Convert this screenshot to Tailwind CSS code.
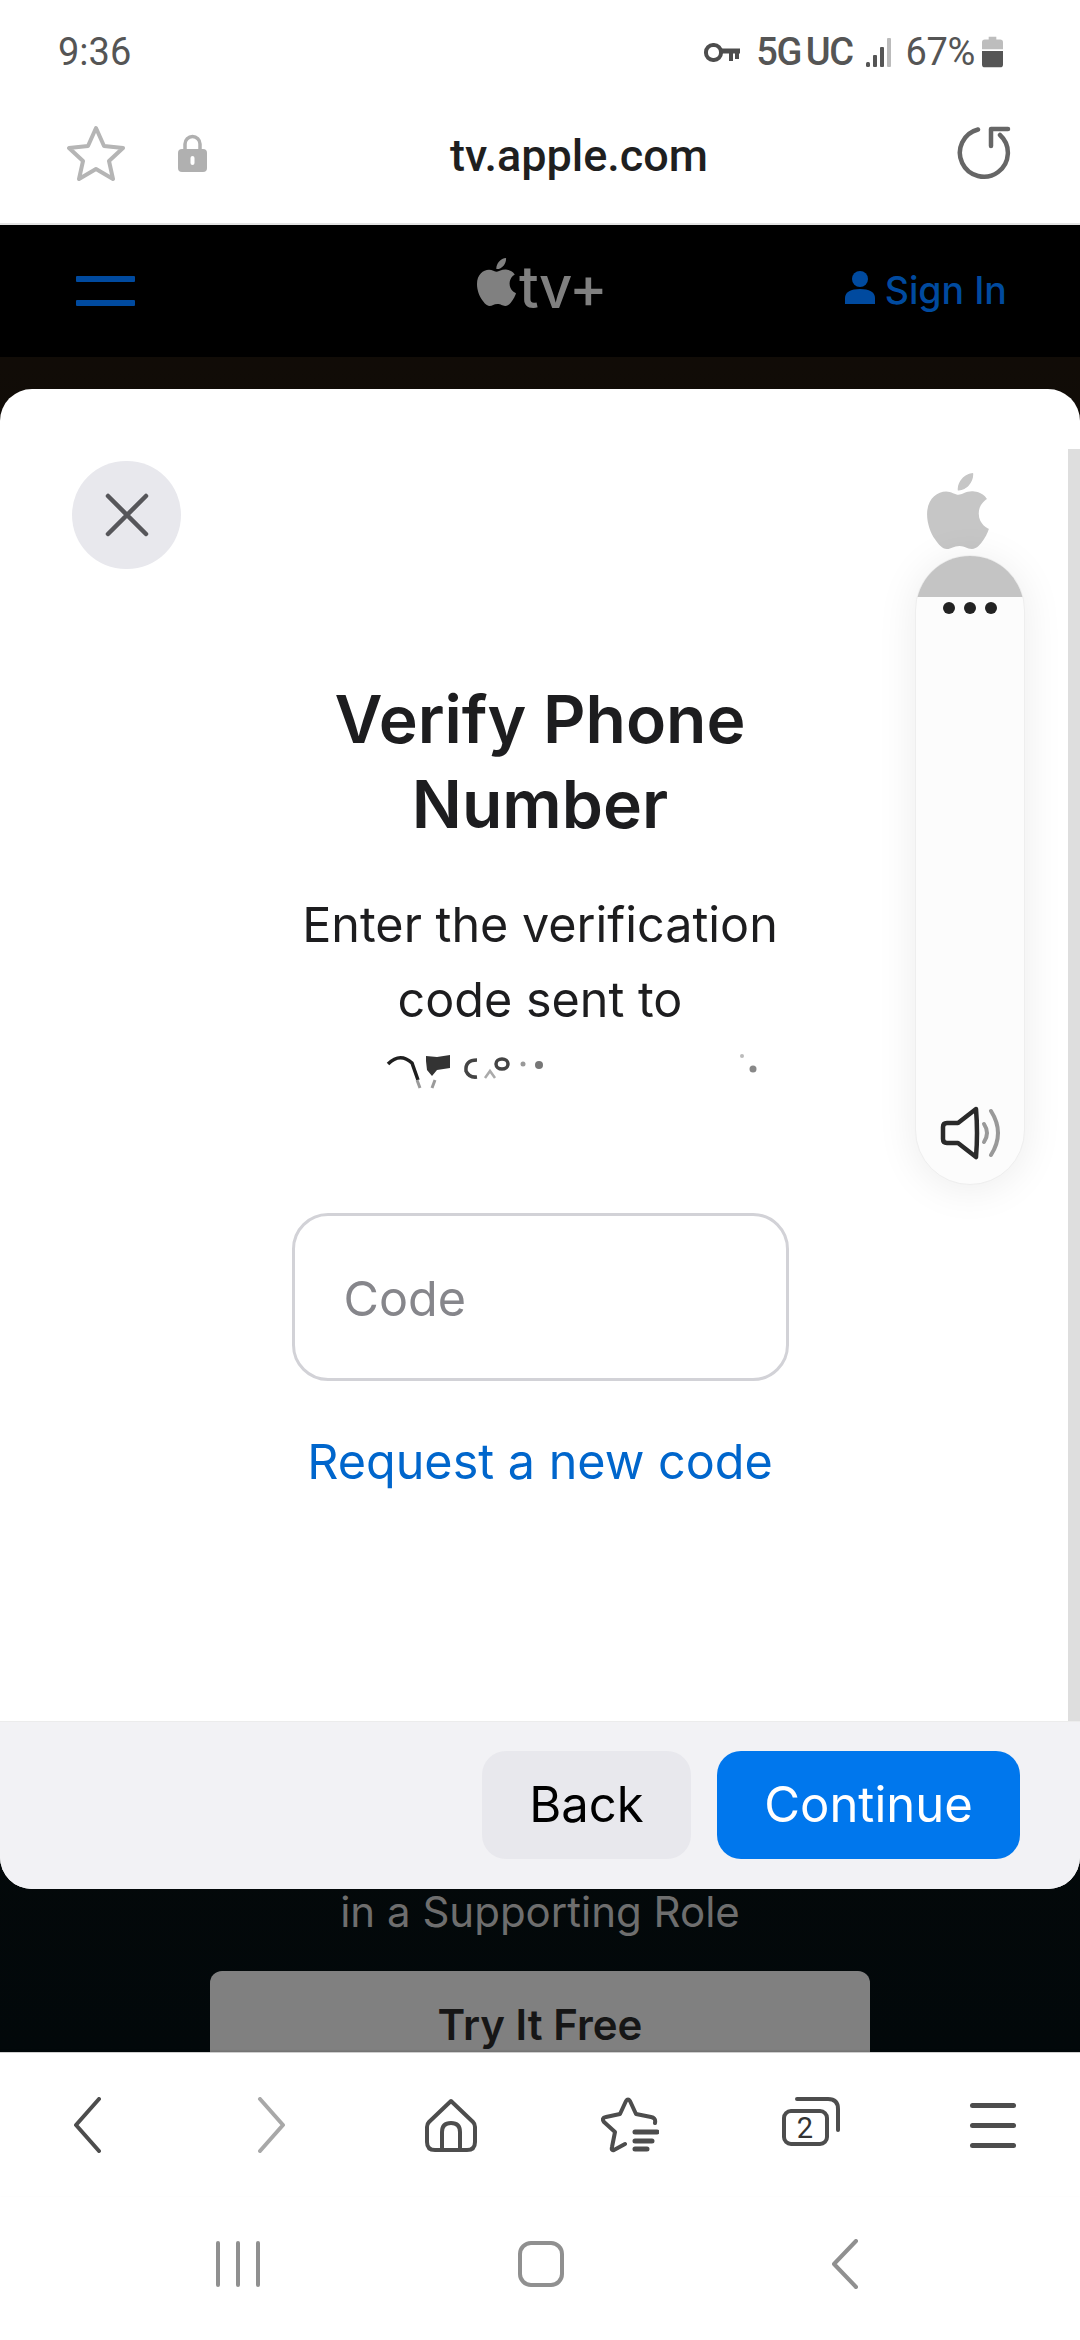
<!DOCTYPE html>
<html lang="en">
<head>
    <meta charset="UTF-8">
    <meta name="viewport" content="width=device-width, initial-scale=1.0">
    <title>tv.apple.com</title>
    <script src="https://cdn.jsdelivr.net/npm/@tailwindcss/browser@4"></script>
</head>
<body class="bg-white font-['Inter',sans-serif]">
<div class="relative w-[1080px] h-[2340px] overflow-hidden flex flex-col">

    <!-- Status bar -->
    <div class="h-[100px] shrink-0 flex items-start pt-[29px] pl-[58px] font-['Roboto',sans-serif] text-[38px] leading-[46px] text-[#555]">
        <span>9:36</span>
        <svg class="ml-[573px] mt-[14px]" width="36" height="20" viewBox="0 0 36 20" fill="none" stroke="#4d4d4d"><rect x="2" y="2" width="15" height="15" rx="7" stroke-width="4"/><path d="M17 8h19" stroke-width="5"/><path d="M27 8v10M33 8v8" stroke-width="4"/></svg>
        <span class="ml-[16px] font-medium tracking-[-1.500px]">5G</span>
        <span class="ml-[5px] font-medium tracking-[-1.500px]">UC</span>
        <svg class="ml-[14px] mt-[8px]" width="27" height="31" viewBox="0 0 27 31"><rect x="0" y="25" width="4" height="5" rx="1.500" fill="#555"/><rect x="7" y="18" width="4" height="12" rx="1" fill="#555"/><rect x="14" y="10" width="4" height="20" rx="1" fill="#555"/><rect x="21" y="1" width="4" height="29" rx="1" fill="#bbb"/></svg>
        <span class="ml-[12px] tracking-[-0.300px]">67%</span>
        <svg class="ml-[7px] mt-[7px]" width="21" height="32" viewBox="0 0 22 32"><path d="M7 0h8v3h4a3 3 0 0 1 3 3v7H0V6a3 3 0 0 1 3-3h4z" fill="#bdbdbd"/><path d="M0 15h22v14a3 3 0 0 1-3 3H3a3 3 0 0 1-3-3z" fill="#555"/></svg>
    </div>

    <!-- Address bar -->
    <div class="relative h-[125px] shrink-0 border-b-2 border-[#e4e4e4] flex items-center justify-center pl-[78px]">
        <svg class="absolute left-[66px] top-[25px]" width="60" height="56" viewBox="0 0 60 56" fill="none" stroke="#b5b5b5" stroke-width="4" stroke-linejoin="round"><path d="M30 3l8 18 19 2-14 13 4 18-17-10-17 10 4-18L3 23l19-2z"/></svg>
        <svg class="absolute left-[178px] top-[34px]" width="29" height="38" viewBox="0 0 29 38"><path d="M7 16V10a7.500 7.500 0 0 1 15 0v6" fill="none" stroke="#b0b0b0" stroke-width="3.500"/><rect x="0" y="15" width="29" height="23" rx="4" fill="#b0b0b0"/><rect x="12.500" y="22" width="4" height="9" rx="2" fill="#fff"/></svg>
        <span class="text-[45px] leading-[54px] font-medium font-['Roboto',sans-serif] text-[#1f1f1f] pb-[12px]">tv.apple.com</span>
        <svg class="absolute left-[956px] top-[26px]" width="56" height="54" viewBox="0 0 56 54" fill="none" stroke="#666" stroke-width="4.500" stroke-linecap="round" stroke-linejoin="round"><path d="M22 3.500A24 24 0 1 0 44 9"/><path d="M52 3H35V20"/></svg>
    </div>

    <!-- Site header behind the sheet -->
    <div class="h-[132px] shrink-0 bg-black flex items-start">
        <div class="ml-[76px] mt-[51px] w-[59px] flex flex-col gap-[18px]">
            <div class="h-[6px] rounded-[1px] bg-[#004a9f]"></div>
            <div class="h-[6px] rounded-[1px] bg-[#004a9f]"></div>
        </div>
        <svg class="ml-[342px] mt-[33px]" width="39" height="48" viewBox="0 0 814 1000" fill="#808080"><path d="M788.100 340.900c-5.800 4.500-108.200 62.200-108.200 190.500 0 148.400 130.300 200.900 134.200 202.200-.6 3.200-20.700 71.900-68.700 141.900-42.800 61.600-87.500 123.100-155.500 123.100s-85.500-39.500-164-39.500c-76.500 0-103.700 40.800-165.900 40.800s-105.600-57-155.500-127C46.700 790.700 0 663 0 541.800c0-194.400 126.400-297.500 250.800-297.500 66.100 0 121.200 43.400 162.700 43.400 39.500 0 101.100-46 176.300-46 28.500 0 130.900 2.600 198.300 99.200zm-234-181.500c31.100-36.900 53.100-88.100 53.100-139.300 0-7.100-.6-14.300-1.900-20.100-50.600 1.900-110.800 33.700-147.100 75.800-28.500 32.400-55.100 83.600-55.100 135.500 0 7.800 1.300 15.600 1.900 18.100 3.200.6 8.400 1.300 13.600 1.300 45.400 0 102.500-30.400 135.500-71.300z"/></svg>
        <span class="ml-[3px] mt-[29px] text-[58px] leading-[66px] font-medium text-[#808080] tracking-[-1px]">tv+</span>
        <svg class="ml-[238px] mt-[46px]" width="30" height="33" viewBox="0 0 30 33" fill="#004a9f"><circle cx="15" cy="8" r="8"/><path d="M0 33v-6c0-6 6-9 15-9s15 3 15 9v6z"/></svg>
        <span class="ml-[10px] mt-[44px] text-[37.500px] leading-[44px] font-medium text-[#004a9f]">Sign In</span>
    </div>

    <!-- Page content behind the sheet -->
    <div class="h-[1695px] shrink-0 bg-linear-to-b from-[#110c07] to-[#02080a] flex flex-col items-center justify-end">
        <p class="text-[42px] leading-[48px] text-[#6e6e6e]">in a Supporting Role</p>
        <div class="mt-[35px] w-[660px] h-[81px] rounded-t-[12px] bg-[#808080] overflow-hidden flex justify-center pt-[30px]">
            <span class="text-[42px] leading-[48px] font-semibold text-[#161616]">Try It Free</span>
        </div>
    </div>

    <!-- Browser toolbar -->
    <div class="h-[144px] shrink-0 bg-white border-t border-[#cfcfcf] shadow-[0_-1px_2px_#00000022] flex items-start pt-[44px] pl-[72px] relative">
        <svg width="30" height="56" viewBox="0 0 30 56" fill="none" stroke="#4d4d4d" stroke-width="4" stroke-linecap="round" stroke-linejoin="round"><path d="M27 2L4 28l23 26"/></svg>
        <svg class="ml-[155px]" width="30" height="56" viewBox="0 0 30 56" fill="none" stroke="#a8a8a8" stroke-width="4" stroke-linecap="round" stroke-linejoin="round"><path d="M3 2l23 26L3 54"/></svg>
        <svg class="ml-[138px] mt-[1px]" width="52" height="54" viewBox="0 0 52 54" fill="none" stroke="#4d4d4d" stroke-width="4" stroke-linejoin="round"><path d="M26 3L4 24q-2 2-2 5v15q0 8 8 8h32q8 0 8-8V29q0-3-2-5z"/><path d="M17 52V34q0-9 9-9t9 9v18"/></svg>
        <svg class="ml-[124px]" width="58" height="56" viewBox="0 0 58 56" fill="none" stroke="#4d4d4d" stroke-width="4" stroke-linejoin="round" stroke-linecap="round"><path d="M24 47L13 53Q10 54 11 50L14 35L3 25Q0 21 5 20L19 17L25 4Q27 1 29 4L35 17L50 20Q55 21 54 26"/><path d="M34 35H56M34 44H51M34 52H46" stroke-width="5"/></svg>
        <svg class="ml-[123px]" width="58" height="52" viewBox="0 0 58 52" fill="none" stroke="#4d4d4d" stroke-width="4" stroke-linecap="round"><rect x="2" y="14" width="43" height="33" rx="7"/><path d="M15 2H46Q56 2 56 12V33"/><text x="23" y="41" text-anchor="middle" font-family="Roboto, sans-serif" font-size="29" fill="#333" stroke="none">2</text></svg>
        <div class="ml-[130px] mt-[6px] w-[46px] flex flex-col gap-[15px]">
            <div class="h-[5px] rounded-full bg-[#4d4d4d]"></div>
            <div class="h-[5px] rounded-full bg-[#4d4d4d]"></div>
            <div class="h-[5px] rounded-full bg-[#4d4d4d]"></div>
        </div>
    </div>

    <!-- Android navigation -->
    <div class="h-[144px] shrink-0 bg-white flex items-start pt-[45px] pl-[216px]">
        <div class="flex gap-[16px] h-[46px]">
            <div class="w-[4px] rounded-full bg-[#909090]"></div>
            <div class="w-[4px] rounded-full bg-[#909090]"></div>
            <div class="w-[4px] rounded-full bg-[#909090]"></div>
        </div>
        <div class="ml-[258px] w-[46px] h-[46px] rounded-[13px] border-[4px] border-[#909090]"></div>
        <svg class="ml-[267px] -mt-[2px]" width="28" height="50" viewBox="0 0 28 50" fill="none" stroke="#909090" stroke-width="4" stroke-linecap="round" stroke-linejoin="round"><path d="M25 2L3 25l22 23"/></svg>
    </div>

    <!-- Verify phone sheet -->
    <div class="absolute left-0 top-[389px] w-[1080px] h-[1500px] rounded-[32px] bg-white overflow-hidden flex flex-col">
        <div class="h-[1332px] shrink-0 flex flex-col items-center">
            <div class="w-full mt-[72px] flex items-start justify-between pl-[72px] pr-[91px]">
                <div class="w-[109px] h-[108px] rounded-full bg-[#e8e8ed] flex items-center justify-center">
                    <svg width="46" height="46" viewBox="0 0 46 46" fill="none" stroke="#56565a" stroke-width="4.500" stroke-linecap="round"><path d="M4 4l38 38M42 4L4 42"/></svg>
                </div>
                <svg class="mt-[12px]" width="62" height="76" viewBox="0 0 814 1000" fill="#c6c6c6"><path d="M788.100 340.900c-5.800 4.500-108.200 62.200-108.200 190.500 0 148.400 130.300 200.900 134.200 202.200-.6 3.200-20.700 71.900-68.700 141.900-42.800 61.600-87.500 123.100-155.500 123.100s-85.500-39.500-164-39.500c-76.500 0-103.700 40.800-165.900 40.800s-105.600-57-155.500-127C46.700 790.700 0 663 0 541.800c0-194.400 126.400-297.500 250.800-297.500 66.100 0 121.200 43.400 162.700 43.400 39.500 0 101.100-46 176.300-46 28.500 0 130.900 2.600 198.300 99.200zm-234-181.500c31.100-36.900 53.100-88.100 53.100-139.300 0-7.100-.6-14.300-1.900-20.100-50.600 1.900-110.800 33.700-147.100 75.800-28.500 32.400-55.100 83.600-55.100 135.500 0 7.800 1.300 15.600 1.900 18.100 3.200.6 8.400 1.300 13.600 1.300 45.400 0 102.500-30.400 135.500-71.300z"/></svg>
            </div>
            <h1 class="mt-[108px] text-[66px] leading-[85px] font-semibold text-[#1d1d1f] text-center">Verify Phone<br>Number</h1>
            <p class="mt-[40px] text-[48.500px] leading-[75px] text-[#1d1d1f] text-center">Enter the verification<br>code sent to</p>
            <!-- smudged phone number -->
            <svg class="self-start ml-[385px] mt-[13px] mb-[12px]" width="380" height="50" viewBox="0 0 380 50" fill="none">
                <path d="M3 14Q15 2 27 13L33 30" stroke="#1f1f1f" stroke-width="3.500"/>
                <path d="M32 30l3 8M50 30l-3 8" stroke="#9a9a9a" stroke-width="3"/>
                <path d="M41 6l11 1 13-2v13l-13 2-5 6-5-6-1-9z" fill="#333"/>
                <path d="M92 10q-12 0-11 11 3 7 11 6" stroke="#444" stroke-width="3.500"/>
                <path d="M100 28l5-7 5 7" stroke="#aaa" stroke-width="2.500"/>
                <ellipse cx="117" cy="14" rx="6" ry="5" stroke="#444" stroke-width="3.500"/>
                <circle cx="138" cy="14" r="2.500" fill="#999"/><circle cx="154" cy="15" r="4" fill="#777"/>
                <circle cx="357" cy="6" r="2" fill="#bbb"/><circle cx="368" cy="19" r="3.500" fill="#888"/>
            </svg>
            <div class="mt-[101px] w-[497px] h-[168px] rounded-[36px] border-[3px] border-[#d2d2d7] bg-white flex items-center pl-[49px] pt-[5px] text-[48.500px] text-[#86868b]">Code</div>
            <a class="mt-[51px] text-[48.500px] leading-[60px] text-[#0066cc]">Request a new code</a>
        </div>
        <div class="h-[168px] shrink-0 bg-[#f2f2f5] border-t border-[#ececec] flex items-start justify-end gap-[26px] pt-[29px] pr-[60px]">
            <div class="w-[209px] h-[108px] rounded-[24px] bg-[#e8e8ed] flex items-center justify-center text-[49px] text-black">Back</div>
            <div class="w-[303px] h-[108px] rounded-[24px] bg-[#0077ed] flex items-center justify-center text-[49px] text-white">Continue</div>
        </div>
    </div>

    <!-- Sheet scrollbar -->
    <div class="absolute left-[1068px] top-[449px] w-[12px] h-[1272px] bg-[#dedede]"></div>

    <!-- Floating side panel -->
    <div class="absolute left-[915px] top-[555px] w-[110px] h-[630px] rounded-[55px] bg-[#fcfcfc] shadow-[0_4px_40px_#00000014] border border-[#eeeeee] overflow-hidden flex flex-col items-center">
        <div class="w-full h-[41px] shrink-0 bg-[#c4c4c4]"></div>
        <div class="mt-[5px] flex gap-[9px]">
            <div class="w-[12px] h-[12px] rounded-full bg-[#222]"></div>
            <div class="w-[12px] h-[12px] rounded-full bg-[#222]"></div>
            <div class="w-[12px] h-[12px] rounded-full bg-[#222]"></div>
        </div>
        <svg class="mt-[492px] ml-[2px]" width="62" height="54" viewBox="0 0 62 54" fill="none" stroke-linecap="round" stroke-linejoin="round"><path d="M36 3L18 17H7q-4 0-4 4v12q0 4 4 4h11l18 14q1-12 1-24T36 3z" stroke="#2a2a2a" stroke-width="4.500"/><path d="M44 18q6 9 0 18" stroke="#999" stroke-width="4"/><path d="M51 5q14 22 0 44" stroke="#999" stroke-width="4"/></svg>
    </div>
</div>
</body>
</html>
